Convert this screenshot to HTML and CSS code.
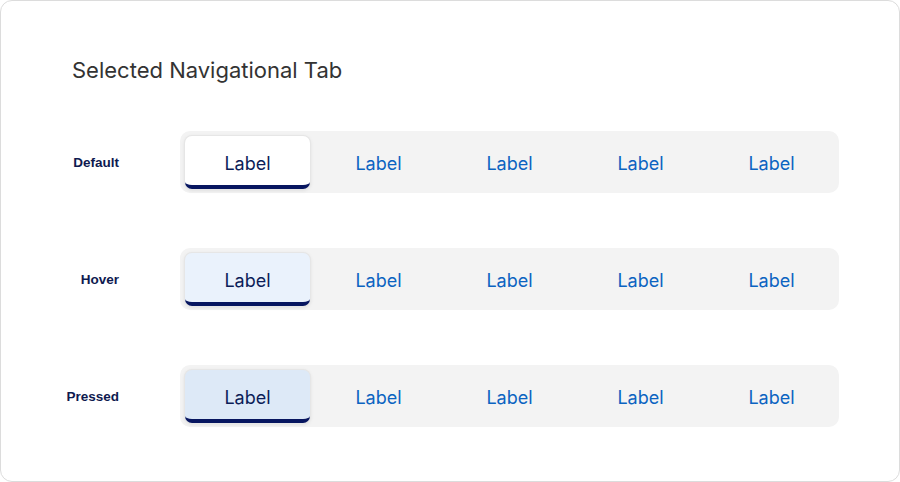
FILE: index.html
```html
<!DOCTYPE html>
<html>
<head>
<meta charset="utf-8">
<link rel="stylesheet" href="styles.css">
</head>
<body>
<div class="card">
  <h1 class="title">Selected Navigational Tab</h1>
  <div class="rows">
    <div class="row">
      <div class="state">Default</div>
      <div class="bar">
        <div class="tab sel">Label</div>
        <div class="tab">Label</div>
        <div class="tab">Label</div>
        <div class="tab">Label</div>
        <div class="tab">Label</div>
      </div>
    </div>
    <div class="row">
      <div class="state">Hover</div>
      <div class="bar">
        <div class="tab sel hover">Label</div>
        <div class="tab">Label</div>
        <div class="tab">Label</div>
        <div class="tab">Label</div>
        <div class="tab">Label</div>
      </div>
    </div>
    <div class="row">
      <div class="state">Pressed</div>
      <div class="bar">
        <div class="tab sel pressed">Label</div>
        <div class="tab">Label</div>
        <div class="tab">Label</div>
        <div class="tab">Label</div>
        <div class="tab">Label</div>
      </div>
    </div>
  </div>
</div>
</body>
</html>
```
FILE: styles.css
```css
html, body {
  margin: 0;
  padding: 0;
  background: #ffffff;
}
.card {
  box-sizing: border-box;
  width: 900px;
  height: 482px;
  border: 1px solid #dcdcdc;
  border-radius: 12px;
  background: #fff;
  padding-top: 56px;
}
.title {
  margin: 0 0 0 71px;
  font-family: Inter, "Open Sans", sans-serif;
  font-weight: 400;
  font-size: 22px;
  line-height: 26px;
  color: #333333;
}
.rows {
  margin-top: 48px;
  display: flex;
  flex-direction: column;
  gap: 55px;
}
.row {
  display: flex;
  align-items: center;
  gap: 61px;
}
.state {
  width: 118px;
  text-align: right;
  font-family: "Liberation Sans", Arial, sans-serif;
  font-weight: bold;
  font-size: 13.5px;
  color: #0e1a4f;
}
.bar {
  display: flex;
  gap: 6px;
  padding: 5px 5px 4px 5px;
  background: #f3f3f3;
  border-radius: 10px;
  height: 62px;
  box-sizing: border-box;
}
.tab {
  width: 125px;
  display: flex;
  align-items: center;
  justify-content: center;
  font-family: Inter, "Open Sans", sans-serif;
  font-size: 18px;
  color: #0b63c1;
  box-sizing: border-box;
  padding-top: 2px;
}
.tab.sel {
  background: #ffffff;
  color: #0c1d58;
  border-radius: 7px;
  border-bottom: 4px solid #071660;
  box-shadow: 0 0 0 1px #e6e6e6, 0 1px 4px rgba(0,0,0,0.12);
  padding-top: 5px;
}
.tab.hover {
  background: #eaf2fc;
}
.tab.pressed {
  background: #dde9f7;
}
```
